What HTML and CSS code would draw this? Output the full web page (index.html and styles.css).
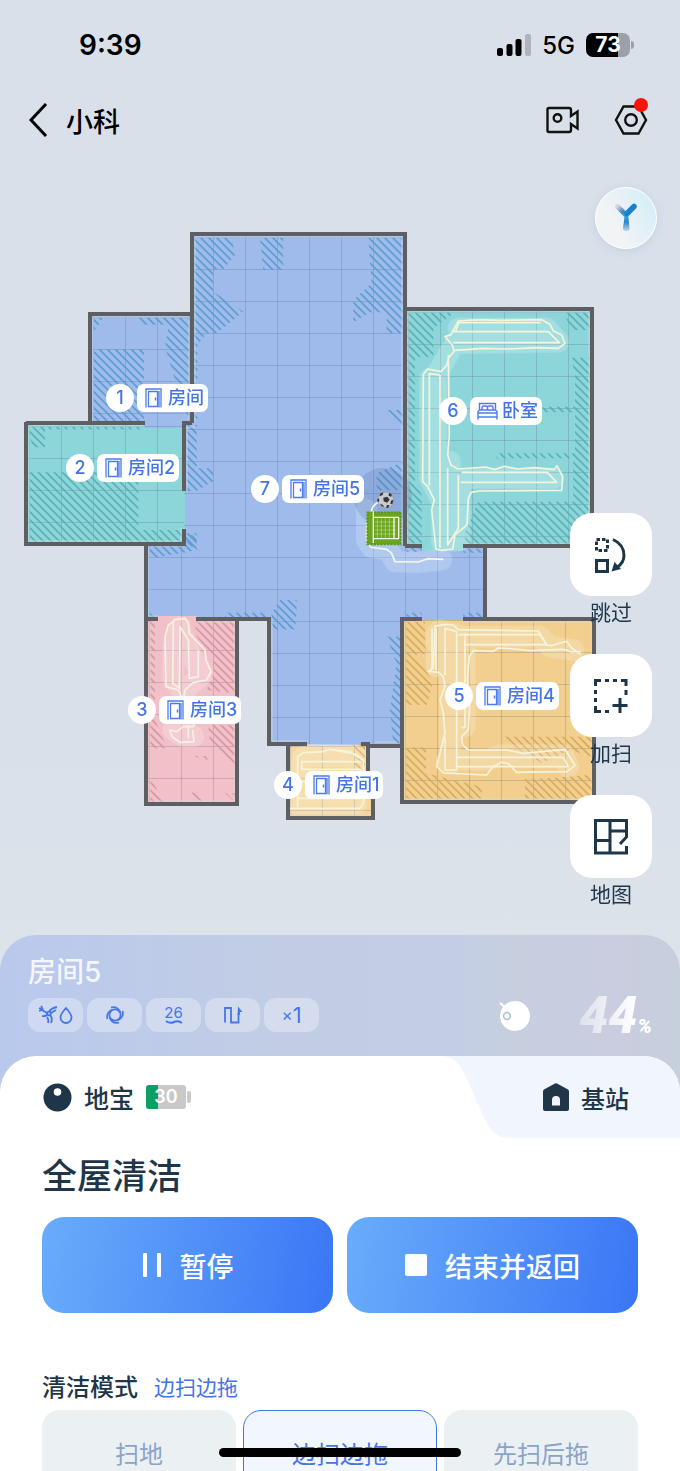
FILE: index.html
```html
<!DOCTYPE html>
<html lang="zh-CN">

<head>
  <meta charset="UTF-8" />
  <meta name="viewport" content="width=device-width, initial-scale=1" />
  <title>小科</title>
  <link rel="stylesheet" href="styles.css">
</head>

<body>
  <div class="app">
    <div class="status-bar">
      <span class="time">9:39</span>
      <div class="status-right">
        <svg class="signal" width="34" height="22" viewBox="0 0 34 22">
          <rect x="0" y="14" width="6" height="8" rx="2" />
          <rect x="9.500" y="10" width="6" height="12" rx="2" />
          <rect x="18.500" y="5" width="6" height="17" rx="2" />
          <rect x="28" y="0" width="6" height="22" rx="2" fill="#adb4bd" />
        </svg>
        <span class="network">5G</span>
        <span class="phone-battery">73</span>
      </div>
    </div>

    <header class="nav">
      <button class="icon-btn" aria-label="返回">
        <svg width="19" height="34" viewBox="0 0 19 34" fill="none" stroke="#000" stroke-width="3"><path d="M17 1 2 17l15 16" /></svg>
      </button>
      <h1>小科</h1>
      <div class="nav-actions">
        <button class="icon-btn" aria-label="视频">
          <svg width="34" height="28" viewBox="0 0 34 28" fill="none" stroke="#111" stroke-width="2.400">
            <path d="M3 2h20a2 2 0 0 1 2 2v6l6.500-4.500v17L25 18v6a2 2 0 0 1-2 2H3a1.500 1.500 0 0 1-1.500-1.500v-21A1.500 1.500 0 0 1 3 2z" />
            <circle cx="11.500" cy="12" r="3.800" />
          </svg>
        </button>
        <button class="icon-btn settings" aria-label="设置">
          <svg width="34" height="30" viewBox="0 0 34 30" fill="none" stroke="#111" stroke-width="2.400">
            <path d="M9.500 1.500h15L32 15l-7.500 13.500h-15L2 15z" />
            <circle cx="17" cy="15" r="5.800" />
          </svg>
          <span class="dot"></span>
        </button>
      </div>
    </header>

    <main class="map">
      <svg class="map-svg" viewBox="0 150 680 785">
        <defs>
          <pattern id="hatchBlue" width="24" height="24" patternUnits="userSpaceOnUse"><path d="M-4-4 28 28M-4 20 4 28M20-4l8 8" stroke="#5f9dd0" stroke-width="5" /></pattern>
          <pattern id="hatchTeal" width="24" height="24" patternUnits="userSpaceOnUse"><path d="M-4-4 28 28M-4 20 4 28M20-4l8 8" stroke="#5ab2b7" stroke-width="5" /></pattern>
          <pattern id="hatchPink" width="24" height="24" patternUnits="userSpaceOnUse"><path d="M-4-4 28 28M-4 20 4 28M20-4l8 8" stroke="#d797a3" stroke-width="5" /></pattern>
          <pattern id="hatchSand" width="24" height="24" patternUnits="userSpaceOnUse"><path d="M-4-4 28 28M-4 20 4 28M20-4l8 8" stroke="#d6ac5e" stroke-width="5" /></pattern>
          <pattern id="gridMain" x="21" y="13" width="32" height="32" patternUnits="userSpaceOnUse"><path class="grid" d="M.5 0v32M0 .5h32" /></pattern>
          <pattern id="grid1" x="125" y="349" width="32" height="32" patternUnits="userSpaceOnUse"><path class="grid" d="M.5 0v32M0 .5h32" /></pattern>
          <pattern id="grid2" x="61" y="458" width="32" height="32" patternUnits="userSpaceOnUse"><path class="grid" d="M.5 0v32M0 .5h32" /></pattern>
          <pattern id="grid3" x="181" y="650" width="32" height="32" patternUnits="userSpaceOnUse"><path class="grid" d="M.5 0v32M0 .5h32" /></pattern>
          <pattern id="grid4" x="322" y="810" width="32" height="32" patternUnits="userSpaceOnUse"><path class="grid" d="M.5 0v32M0 .5h32" /></pattern>
          <pattern id="grid5" x="437" y="652" width="32" height="32" patternUnits="userSpaceOnUse"><path class="grid" d="M.5 0v32M0 .5h32" /></pattern>
          <pattern id="grid6" x="440" y="344" width="32" height="32" patternUnits="userSpaceOnUse"><path class="grid" d="M.5 0v32M0 .5h32" /></pattern>
        </defs>

        <!-- floors -->
        <path fill="#9ebbeb" d="M192 234h213v312l80 1v72h-83v126l-133-1V619H146v-75h38V423h8z" />
        <path fill="#9ebbeb" d="M90 314h102v109h-8v6h-39v-6H90z" />
        <path fill="#8cd6d9" d="M26 423h119v5h40v116H26z" />
        <path fill="#8cd6d9" d="M405 309h187v237H463v5h-41v-5h-17z" />
        <path fill="#f2cf8e" d="M402 619h192v183H402z" />
        <path fill="#9ebbeb" d="M422 612h41v8h-41z" />
        <path fill="#f2c0c8" d="M147 619h11v-3h39v3h41v185h-91z" />
        <path fill="#f6d69c" d="M288 746h80v35h6v37h-86z" />
        <path fill="url(#gridMain)" d="M192 234h213v312l80 1v72h-83v126l-133-1V619H146v-75h38V423h8z" />
        <path fill="url(#grid1)" d="M90 314h102v109H90z" />
        <path fill="url(#grid2)" d="M26 423h158v121H26z" />
        <path fill="url(#grid6)" d="M405 309h187v237H405z" />
        <path fill="url(#grid5)" d="M402 619h192v183H402z" />
        <path fill="url(#grid3)" d="M147 619h91v185h-91z" />
        <path fill="url(#grid4)" d="M288 746h80v35h6v37h-86z" />

        <!-- carpets and uncleaned areas -->
        <g fill="url(#hatchBlue)">
          <path transform="translate(180 225) scale(.3333)" d="M42 38H155l10 52-35 43h-30v67l90 60-80 65H80l-28 35v225H42zM240 38h70v97h-60zM565 38h103v287h-48v-63h-50l-50 30v-67l55-50zM610 555h58v57zM590 745l78-35v85h-78zM20 600h30v130h50v38l-50 30H20z" />
          <path transform="translate(130 530) scale(.3333)" d="M58 50h102V15h40v45l-40 8-80 14H58zM285 248h125v14H285zM425 250l25-40h50v30l-5 58h-70zM58 235l25 25H58zM770 320h40v320h-20l-10-100 20-140z" />
          <path transform="translate(340 460) scale(.3333)" d="M200 262h45v14h-45zM370 266h58v12h-58zM200 458h45v12h-45zM370 458h58v12h-58z" />
          <path transform="translate(10 220) scale(.3333)" d="M250 388h152v216H250zM480 292h58v203h-38l-35-115zM385 292h100v22h-80zM250 292h30l-30 45zM520 560h18v40zM530 940h30v40h-30z" />
        </g>
        <path fill="url(#hatchTeal)" transform="translate(10 220) scale(.3333)" d="M58 620h342v8H105v54H70l-12-32zM58 757h327v173h130v35H58z" />
        <path fill="url(#hatchTeal)" transform="translate(390 295) scale(.3333)" d="M52 52h143l-65 48v85H75v375l20 40v145H52zM520 52h78v53h-53zM540 188h58v560H225v-38l40-90h285V490H320v-15h235V352h-95v-17h95V230z" />
        <path fill="url(#hatchPink)" transform="translate(130 530) scale(.3333)" d="M195 273h119v217l-84-10 20-50v-50l-50-60zM58 273h17v297l30 70v15H58zM235 585h79v130l-74-75zM58 735l42 80H58zM185 788h22l20 24h-36zM285 790h30v25zM190 678h42v14z" />
        <path fill="url(#hatchSand)" transform="translate(390 500) scale(.3333)" d="M45 365h60v75l15 20-45 5 55 80-20 70H45zM45 742h63v78l167 40v36H45zM405 836h45l155-12v72H405zM335 710h270v60l-65-20-85 40-75-45z" />
        <path fill="url(#hatchSand)" transform="translate(130 530) scale(.3333)" d="M670 640h35v80h-35z" />

        <!-- cleaned halo -->
        <g class="halo">
          <g transform="translate(390 295) scale(.3333)">
            <path d="M205 100h265l35 40-310 5M185 160l-40 70M120 250v300l35 70v120l55-5V560M140 250v330M180 500v200M200 550h290" />
          </g>
          <g transform="translate(390 500) scale(.3333)">
            <path d="M140 400v100M180 400v390M150 390l70 20h230l30 30 70 10M225 430v250M170 780h120l40-15h190l15 35" />
          </g>
          <g transform="translate(130 530) scale(.3333)">
            <path d="M150 290l-20 60v100l25 30M150 300l40 90 30 40-55 50v110M130 600l30 20h30" />
            <path d="M520 680h160v140H500z" />
          </g>
          <path transform="translate(340 460) scale(.3333)" d="M80 150v90l15 22 50 8 20 35 70 2 70-8" />
        </g>

        <!-- walls -->
        <path class="edge" d="M195 422V237h207v307M187 490v-63h8M93 422V317h96v104M29 541V426h115M29 541h152v-13M408 544V312h181v232H466M405 622v177h187V622H464M150 622v179h85V622h-38M272 620v121h36M149 547v69h9M397 742h-22M290 747v68h81" />
        <path class="wall" d="M90 423V314h101M192 423V234h213v312M184 491v-68h8M26 423h119M26 422v122h158v-15M405 309h187v237H463M422 546h-17M485 547v72M422 619h-20v183h192V619H463M402 745V619M146 544v75h12M196 619h73v125h38M146 619v185h91V619M288 745v73h85v-37M402 746h-32M361 744h7v37" />

        <!-- trail -->
        <g class="trail">
          <g transform="translate(390 295) scale(.3333)">
            <path d="M192 168l-5-18-22-25 18-6 22-41q60-6 125-2l125-2 25 14 10 20 25 12 10 25-20 15-65-2-90 4-70-2-85 6-20 24-4 20-18 20-40-8-13 16-2 322 15 15 20 40-8 30 13 117 15 4 35-4 7-42 36-30 4-80 8-18 25-4 247-2 3-41-17-33-8 12-60-6-50 4-40-8-30 10-25-8-85 6-20-12-10-30 5-60-3-240" />
            <path d="M197 108l10-25h245M188 110h287l33 33H190M118 572V236l32 4v518M173 520v230l32-50V540M212 562h288l-28-30H215" />
          </g>
          <g transform="translate(390 500) scale(.3333)">
            <path d="M572 455l-27 1-25-8-100 4-60-6-35-2-15 10-60-2-12 18-6 70 8 60-5 90-20 20 3 25 17 15h115l50 10 125-12 30 48-25 19-150 2-25-26-20-4-25 12-20 26-130-6-20-20 10-40 15-60-5-60-10-40 15-40-5-30-15-12-30-3 15-10 5-125q25-8 55-4l15 14 240 4 25 42 15 2 45-13 15 20 27 20" />
            <path d="M138 385v125M126 505V385M165 525V385l35 10v415h-35V710M225 400v282h-10M205 404h245l20 30H222M200 772h320l15 28H200" />
          </g>
          <g transform="translate(130 530) scale(.3333)">
            <path d="M130 270l35-5 10 15 3 30 47 50 3 30 15 35-13 25-40 8-25 22-5 30M155 500l-10-20-37-10-3-150 10-35 15-10-2 185 20 15 2-185 25 40 3 115 27-5v-80M118 600l22 5 20-15h30l5-20M118 600l10 22 22 15 42-2-4-35M175 585v40" />
            <path d="M480 835h210l10-15V690l-25-18-75-14-20 7-60 3-17 12v150M695 695H515v23h180M600 658l60 7 38 25M503 755h40M503 805h190" />
          </g>
        </g>

        <!-- robot position -->
        <circle cx="383" cy="497" r="29" fill="#44689e" opacity=".2" />
        <g transform="translate(340 460) scale(.3333)" fill="none">
          <path stroke="#f4f7f5" stroke-width="5" d="M116 126q-20 10-22 30M80 190v50l12 22 48 6 15 12 10 25 70 1 30-10 45 2" />
          <rect x="82" y="157" width="100" height="96" fill="#6ba51d" stroke="#5b9713" stroke-width="5" stroke-dasharray="7 3" />
          <path stroke="#bdd88f" stroke-width="2" d="M112 175v60M124 175v60M136 175v60M148 175v60M103 186h65M103 198h65M103 210h65M103 222h65" />
          <path stroke="#f6faec" stroke-width="4" d="M100 154v95M100 172h77M100 236h77M162 172v64M176 172v64" />
          <circle cx="137" cy="120" r="24" fill="#c8cacf" stroke="#8d929b" stroke-width="2" />
          <path fill="#33353a" d="m130 113 12-3 7 9-8 9-10-4zM120 101l10-4-2 8-9 4zM148 98l8 6-3 7-8-5zM153 122l7-3-3 14-6-2zM122 131l8 5 1 6-9-6zM113 115l5 3-1 8-5-2zM141 135h7l-3 8h-7z" />
        </g>
      </svg>

      <div class="pin pin-1"><b>1</b><span><svg width="17" height="20"><use href="#door" /></svg>房间</span></div>
      <div class="pin pin-2"><b>2</b><span><svg width="17" height="20"><use href="#door" /></svg>房间2</span></div>
      <div class="pin pin-3"><b>3</b><span><svg width="17" height="20"><use href="#door" /></svg>房间3</span></div>
      <div class="pin pin-4"><b>4</b><span><svg width="17" height="20"><use href="#door" /></svg>房间1</span></div>
      <div class="pin pin-5"><b>5</b><span><svg width="17" height="20"><use href="#door" /></svg>房间4</span></div>
      <div class="pin pin-6"><b>6</b><span class="bed-tag"><svg width="21" height="18"><use href="#bed" /></svg>卧室</span></div>
      <div class="pin pin-7"><b>7</b><span><svg width="17" height="20"><use href="#door" /></svg>房间5</span></div>

      <button class="assistant" aria-label="语音助手">
        <svg width="26" height="32" viewBox="0 0 26 32" fill="none" stroke-linecap="round">
          <defs>
            <linearGradient id="armLeft" x1="0" y1="0" x2="1" y2="1"><stop offset="0" stop-color="#e6ced6" /><stop offset=".6" stop-color="#3f8cc6" /><stop offset="1" stop-color="#2b9fe0" /></linearGradient>
            <linearGradient id="stem" x1="0" y1="0" x2="0" y2="1"><stop offset="0" stop-color="#35b0ee" /><stop offset=".5" stop-color="#2a86c8" /><stop offset="1" stop-color="#c9d9e8" /></linearGradient>
          </defs>
          <path stroke="url(#armLeft)" stroke-width="5" d="m4.500 4.500 8 8" />
          <path fill="url(#stem)" d="M12 11h3l1.500 15a3 3 0 0 1-6.500 0z" />
          <path stroke="#1680cd" stroke-width="5.500" d="m21 4.500-7 7" />
        </svg>
      </button>

      <div class="tools">
        <button class="tool">
          <span class="tool-box">
            <svg width="36" height="36" viewBox="0 0 36 36" fill="none" stroke="#1e3648" stroke-width="3">
              <path stroke-dasharray="3.500 2" d="M3.500 2.500h11v11h-11z" />
              <path d="M3.500 23.500h11v11h-11z" />
              <path d="M20 2.500q11 5 11 16 0 7-7 12" />
              <path fill="#1e3648" stroke="none" d="m18.500 34.500 3-9.500 6.500 7z" />
            </svg>
          </span>
          跳过
        </button>
        <button class="tool">
          <span class="tool-box">
            <svg width="36" height="36" viewBox="0 0 36 36" fill="none" stroke="#1e3648" stroke-width="3">
              <path d="M2.500 8V2.500H8M12 2.500h4M20 2.500h4M28 2.500h5V8M2.500 12v4M2.500 20v4M2.500 28v5.500H8M12 33.500h4M33 12v5M27 20v15M19.500 27.500h15" />
            </svg>
          </span>
          加扫
        </button>
        <button class="tool">
          <span class="tool-box">
            <svg width="36" height="36" viewBox="0 0 36 36" fill="none" stroke="#1e3648" stroke-width="3">
              <path d="M33.500 27v7H2.500V1.500h31V18l-6.500 7M17 1.500v33M17 12h16M2.500 21.500H17" />
            </svg>
          </span>
          地图
        </button>
      </div>
    </main>

    <section class="progress">
      <div class="progress-info">
        <div>
          <h2>房间5</h2>
          <div class="chips">
            <span class="chip">
              <svg width="36" height="20" viewBox="0 0 36 20" fill="none" stroke="#4577ea" stroke-width="1.800">
                <path d="m1 3 8 5M3 1l2 4M1 6l3-1M11 7q2-4 8-5M13 8l5-3M12 10q3 3 1 8M10 9q-3 3-6 2M9 12q2 3 1 6" />
                <circle cx="11" cy="8.500" r="1.800" />
                <path d="M28 3q-5.500 6-5.500 9.500a5.500 5.500 0 0 0 11 0Q33.500 9 28 3z" />
              </svg>
            </span>
            <span class="chip">
              <svg width="20" height="20" viewBox="0 0 20 20" fill="none" stroke="#4577ea" stroke-width="1.700">
                <circle cx="10" cy="10" r="5.600" />
                <path d="M6 2.500q6-2 9.500 5M17.500 6q2 6-5 9.500M14 17.500q-6 2-9.500-5M2.500 14q-2-6 5-9.500" />
              </svg>
            </span>
            <span class="chip chip-water">26
              <svg width="18" height="5" viewBox="0 0 18 5" fill="none" stroke="#4577ea" stroke-width="2"><path d="M1 1q4 3 8 1t8 1" /></svg>
            </span>
            <span class="chip">
              <svg width="20" height="18" viewBox="0 0 20 18" fill="none" stroke="#4577ea" stroke-width="1.800">
                <path d="M2 16.500V2h6v14.500h7.500V8" />
                <path fill="#4577ea" stroke="none" d="M15 .5 19.500 6 17 6v3h-2.500z" />
              </svg>
            </span>
            <span class="chip chip-times"><small>×</small>1</span>
          </div>
        </div>
        <svg class="robot" width="32" height="32" viewBox="0 0 32 32">
          <path d="m1 3 6 5" stroke="#fff" stroke-width="2" />
          <circle cx="16" cy="16" r="15" fill="#fff" />
          <circle cx="8" cy="16" r="3.400" fill="none" stroke="#a9bbdd" stroke-width="1.500" />
        </svg>
        <div class="percent"><span>44</span><small>%</small></div>
      </div>

      <div class="sheet">
        <div class="tabs">
          <button class="tab">
            <svg width="29" height="29" viewBox="0 0 29 29"><circle cx="14.500" cy="14.500" r="14" fill="#1e3648" /><circle cx="14.500" cy="9" r="3.800" fill="#fff" /></svg>
            地宝
            <span class="robot-battery">30</span>
          </button>
          <button class="tab tab-station">
            <svg class="tab-bg" viewBox="0 0 240 82" preserveAspectRatio="none"><path fill="#f1f6fe" d="M0 0h240v82H70Q54 82 46 66L24 17Q16 0 0 0z" /></svg>
            <svg width="26" height="28" viewBox="0 0 26 28"><path fill="#1e3648" d="M12 .5q1-.5 2 0l11 6q1 .6 1 2V26q0 2-2 2H2q-2 0-2-2V8.500q0-1.400 1-2z" /><path fill="#f1f6fe" d="M9 22.500V17a4 4 0 0 1 8 0v5.500z" /></svg>
            <span>基站</span>
          </button>
        </div>

        <div class="sheet-body">
          <h2>全屋清洁</h2>
          <div class="actions">
            <button class="action">
              <svg width="20" height="24" viewBox="0 0 20 24" fill="#fff"><rect x="1" width="4" height="24" rx="1" /><rect x="15" width="4" height="24" rx="1" /></svg>
              暂停
            </button>
            <button class="action">
              <svg width="22" height="22" viewBox="0 0 22 22"><rect width="22" height="22" rx="2" fill="#fff" /></svg>
              结束并返回
            </button>
          </div>

          <div class="mode-title">
            <h3>清洁模式</h3>
            <span>边扫边拖</span>
          </div>
          <div class="modes">
            <button class="mode">扫地</button>
            <button class="mode active">边扫边拖</button>
            <button class="mode">先扫后拖</button>
          </div>
        </div>
      </div>
    </section>

    <div class="home-indicator"></div>
  </div>

  <svg width="0" height="0" class="sprite">
    <symbol id="door" viewBox="0 0 17 20">
      <path d="M1 19.500V1h15v18.500M14 19.500V3M3.500 3.500h9v15h-9z" fill="none" stroke="#4b7cec" stroke-width="1.300" />
      <path d="M10.500 9.500v3" stroke="#4b7cec" stroke-width="1.500" />
    </symbol>
    <symbol id="bed" viewBox="0 0 21 18">
      <path d="M2.500 8V1.500h16V8M5 8V5.500q0-1.500 1.500-1.500H9q1.500 0 1.500 1.500V8M10.500 5.500Q10.500 4 12 4h2.500Q16 4 16 5.500V8M1 17.500V9.500L2.500 8h16L20 9.500v8M1 11h19M1 15h19" fill="none" stroke="#4b7cec" stroke-width="1.400" />
    </symbol>
  </svg>
</body>

</html>
```
FILE: styles.css
```css
* {
  box-sizing: border-box;
  margin: 0;
  padding: 0;
}

body {
  background: #d9e0ea;
  color: #1e3648;
  font-family: Inter, 'Noto Sans CJK SC', sans-serif;
}

button {
  border: none;
  background: none;
  color: inherit;
  font-family: inherit;
  cursor: pointer;
}

svg {
  display: block;
  flex-shrink: 0;
}

.sprite {
  position: absolute;
}

.app {
  position: relative;
  height: 100vh;
  overflow: hidden;
  background: linear-gradient(#d9e0ea 50%, #dce3e9 65%);
}

/* status bar */
.status-bar {
  display: flex;
  justify-content: space-between;
  align-items: center;
  height: 90px;
  padding: 0 50px 0 79px;
  color: #000;
}

.time {
  font-size: 28px;
  font-weight: 600;
}

.status-right {
  display: flex;
  align-items: center;
  gap: 11px;
}

.network {
  font-size: 24px;
  font-weight: 500;
}

.phone-battery {
  position: relative;
  width: 44px;
  height: 24px;
  border-radius: 7px;
  background: linear-gradient(90deg, #000 73%, #9ba1aa 73%);
  color: #fff;
  font-size: 21px;
  font-weight: 700;
  line-height: 24px;
  text-align: center;
}

.phone-battery::after {
  content: '';
  position: absolute;
  top: 8px;
  right: -4px;
  width: 3px;
  height: 8px;
  border-radius: 0 3px 3px 0;
  background: #9ba1aa;
}

/* nav */
.nav {
  display: flex;
  align-items: center;
  height: 60px;
  padding: 0 32px 0 29px;
  color: #000;
}

.nav h1 {
  margin-left: 18px;
  font-size: 27px;
  font-weight: 500;
}

.nav-actions {
  display: flex;
  align-items: center;
  gap: 34px;
  margin-left: auto;
}

.settings {
  position: relative;
}

.dot {
  position: absolute;
  top: -7px;
  right: 0;
  width: 14px;
  height: 14px;
  border-radius: 50%;
  background: #fb130a;
}

/* map */
.map {
  position: relative;
}

.map-svg {
  width: 100%;
}

.grid {
  fill: none;
  stroke: #45617c;
  stroke-opacity: 0.24;
}

.wall {
  fill: none;
  stroke: #5d5f62;
  stroke-width: 4;
}

.edge {
  fill: none;
  stroke: #d5dbe0;
  stroke-width: 1;
  opacity: 0.7;
}

.halo {
  fill: none;
  stroke: #fff;
  stroke-width: 64;
  stroke-linecap: round;
  stroke-linejoin: round;
  opacity: 0.2;
}

.trail {
  fill: none;
  stroke: #f5f4dc;
  stroke-width: 5;
  stroke-linejoin: round;
}

.pin {
  position: absolute;
  display: flex;
  align-items: center;
  gap: 3px;
  color: #4374e8;
  font-size: 18px;
  font-weight: 500;
  line-height: 28px;
}

.pin b {
  width: 28px;
  height: 28px;
  border-radius: 50%;
  background: #fff;
  font-weight: 500;
  text-align: center;
}

.pin span {
  display: flex;
  align-items: center;
  gap: 6px;
  height: 28px;
  padding: 0 4px 0 8px;
  border-radius: 7px;
  background: #fff;
  white-space: nowrap;
}

.pin .bed-tag {
  padding-left: 7px;
  gap: 4px;
}

.pin-1 { left: calc(106 / 680 * 100%); top: calc(234 / 785 * 100%); }
.pin-2 { left: calc(66 / 680 * 100%); top: calc(304 / 785 * 100%); }
.pin-3 { left: calc(128 / 680 * 100%); top: calc(546 / 785 * 100%); }
.pin-4 { left: calc(274 / 680 * 100%); top: calc(621 / 785 * 100%); }
.pin-5 { left: calc(445 / 680 * 100%); top: calc(532 / 785 * 100%); }
.pin-6 { left: calc(439 / 680 * 100%); top: calc(247 / 785 * 100%); }
.pin-7 { left: calc(251 / 680 * 100%); top: calc(325 / 785 * 100%); }

.assistant {
  position: absolute;
  top: 37px;
  right: 23px;
  display: flex;
  justify-content: center;
  align-items: center;
  width: 62px;
  height: 62px;
  border: 1px solid #fff;
  border-radius: 50%;
  background: linear-gradient(60deg, #f1f3f5 35%, #cfeef8);
  box-shadow: 0 2px 8px rgba(130, 170, 200, 0.25);
}

.tools {
  position: absolute;
  top: 363px;
  right: 28px;
  display: flex;
  flex-direction: column;
  gap: 24px;
}

.tool {
  display: flex;
  flex-direction: column;
  align-items: center;
  font-size: 21px;
  line-height: 34px;
}

.tool-box {
  display: flex;
  justify-content: center;
  align-items: center;
  width: 82px;
  height: 83px;
  border-radius: 22px;
  background: #fff;
}

/* progress */
.progress {
  border-radius: 36px 36px 0 0;
  background: linear-gradient(90deg, #b9c9ed, #c2cde5 40%, #c3cee6 68%, #c6cfdf 73%, #c9cddf 92%, #c6cfdc);
}

.progress-info {
  display: flex;
  align-items: flex-end;
  height: 121px;
  padding: 0 28px 24px;
}

.progress-info h2 {
  color: rgba(255, 255, 255, 0.85);
  font-size: 28px;
  font-weight: 500;
  line-height: 36px;
}

.chips {
  display: flex;
  gap: 4px;
  margin-top: 8px;
}

.chip {
  display: flex;
  justify-content: center;
  align-items: center;
  width: 55px;
  height: 34px;
  border-radius: 12px;
  background: rgba(255, 255, 255, 0.3);
  color: #4577ea;
  font-size: 22px;
}

.chip-water {
  flex-direction: column;
  font-size: 15px;
  line-height: 15px;
}

.chip-times small {
  font-size: 17px;
}

.robot {
  margin-left: auto;
}

.percent {
  display: flex;
  align-items: baseline;
  margin-left: 48px;
  color: #fff;
  font-family: Roboto, sans-serif;
  font-style: italic;
  font-weight: 900;
}

.percent span {
  background: linear-gradient(90deg, rgba(255, 255, 255, 0.4), #fff);
  -webkit-background-clip: text;
  background-clip: text;
  color: transparent;
  font-size: 52px;
  line-height: 32px;
  padding: 8px 0 4px;
  margin-bottom: -4px;
}

.percent small {
  font-size: 20px;
  line-height: 12px;
}

/* bottom sheet */
.sheet {
  overflow: hidden;
  border-radius: 36px 36px 0 0;
  background: #fff;
}

.tabs {
  display: flex;
  justify-content: space-between;
}

.tab {
  display: flex;
  align-items: center;
  gap: 12px;
  height: 82px;
  padding-left: 43px;
  font-size: 25px;
  font-weight: 500;
}

.tab-station {
  position: relative;
  z-index: 0;
  width: 240px;
  padding-left: 103px;
  font-size: 24px;
}

.tab-bg {
  position: absolute;
  z-index: -1;
  inset: 0;
  width: 100%;
  height: 100%;
}

.robot-battery {
  position: relative;
  width: 40px;
  height: 24px;
  border-radius: 3px;
  background: linear-gradient(90deg, #0d9e66 31%, #c9c9c9 31%);
  color: #fff;
  font-size: 18px;
  font-weight: 600;
  line-height: 24px;
}

.robot-battery::after {
  content: '';
  position: absolute;
  top: 6px;
  right: -5px;
  width: 4px;
  height: 12px;
  border-radius: 2px;
  background: #c9c9c9;
}

.sheet-body {
  padding: 14px 42px 40px;
}

.sheet-body h2 {
  font-size: 35px;
  font-weight: 500;
  line-height: 48px;
}

.actions {
  display: grid;
  grid-template-columns: 1fr 1fr;
  gap: 14px;
  margin-top: 17px;
}

.action {
  display: flex;
  justify-content: center;
  align-items: center;
  gap: 18px;
  height: 96px;
  border-radius: 22px;
  background: linear-gradient(100deg, #68adfb, #3a76f5);
  color: #fff;
  font-size: 27px;
  font-weight: 500;
}

.mode-title {
  display: flex;
  align-items: center;
  gap: 16px;
  margin-top: 57px;
  line-height: 36px;
}

.mode-title h3 {
  font-size: 24px;
  font-weight: 500;
}

.mode-title span {
  color: #4374e8;
  font-size: 21px;
}

.modes {
  display: grid;
  grid-template-columns: repeat(3, 1fr);
  gap: 7px;
  margin-top: 4px;
}

.mode {
  height: 90px;
  border-radius: 18px;
  background: #ebf0f3;
  color: #8aa4c6;
  font-size: 24px;
  line-height: 28px;
}

.mode.active {
  border: 1px solid #4374e8;
  background: #f2f6fe;
  color: #4374e8;
}

.home-indicator {
  position: absolute;
  bottom: 14px;
  left: 50%;
  width: 242px;
  height: 9px;
  margin-left: -121px;
  border-radius: 5px;
  background: #000;
}
```
